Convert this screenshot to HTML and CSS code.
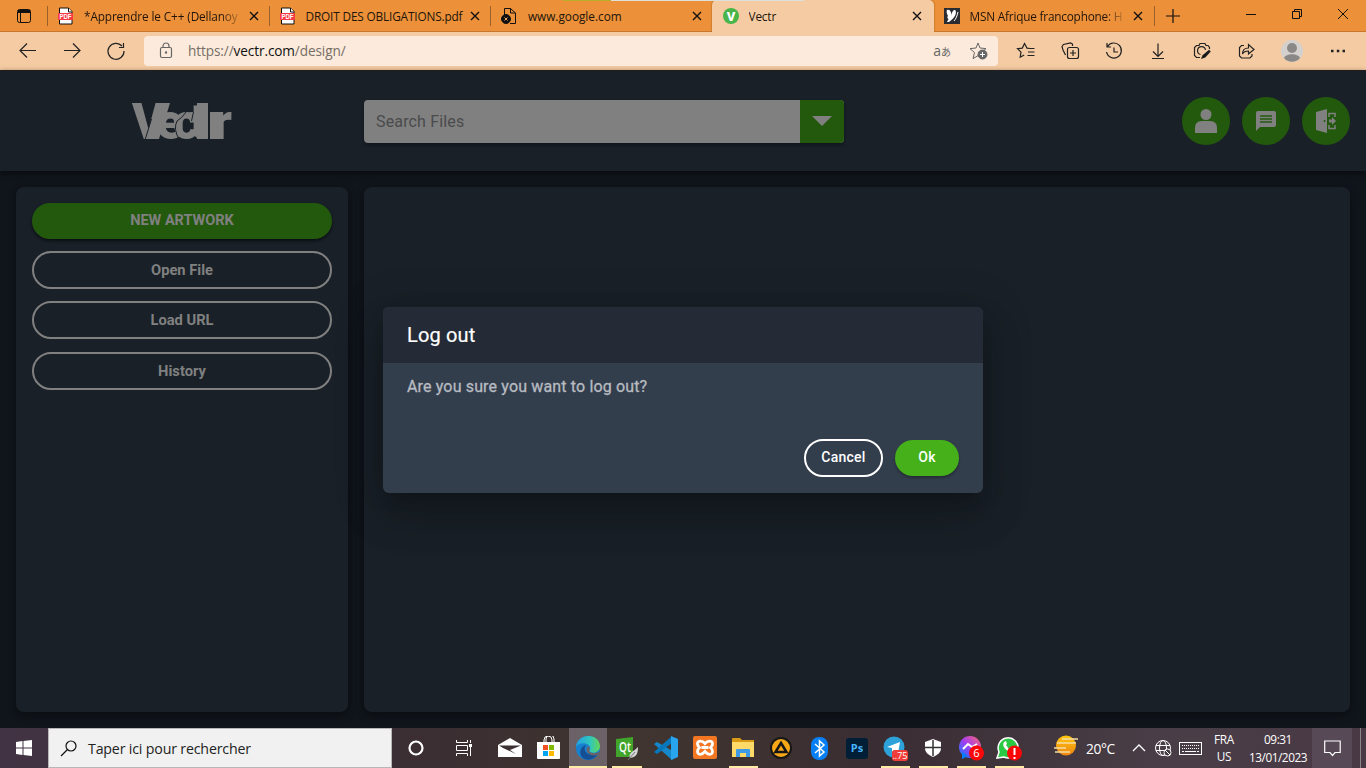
FILE: index.html
```html
<!DOCTYPE html>
<html lang="fr">
<head>
<meta charset="utf-8">
<title>Vectr</title>
<link rel="stylesheet" href="styles.css">
</head>
<body>
<svg width="0" height="0" class="defs">
  <defs>
    <symbol id="close" viewBox="0 0 10 10"><path d="M1 1l8 8M9 1L1 9" stroke="#111" stroke-width="1.4" fill="none"/></symbol>
    <symbol id="pdf" viewBox="0 0 16 18"><path d="M1.500 1h9l3.500 3.500V17H1.500z" fill="#fff" stroke="#111"/><path d="M10.500 1v4H14" fill="#fff" stroke="#111"/><rect y="6" width="15" height="7" rx="1" fill="#f83b42"/><text x="1.500" y="12" textLength="12" lengthAdjust="spacingAndGlyphs" font-family="Liberation Sans" font-weight="700" font-size="6.300" fill="#fff">PDF</text></symbol>
  </defs>
</svg>
<header class="browser">
  <div class="tabs">
    <div class="top-strip"></div>
    <div class="workspace"><svg width="16" height="16" viewBox="0 0 16 16" fill="none" stroke="#111"><rect x="1.500" y="1.500" width="13" height="13" rx="2"/><path d="M2 3.500h12" stroke-width="3"/><path d="M4.500 5v9"/></svg></div>
    <div class="tab"><svg class="fav" width="16" height="18"><use href="#pdf"/></svg><span class="title fade t1">*Apprendre le C++ (Dellanoy</span><svg width="10" height="10"><use href="#close"/></svg></div>
    <div class="tab"><svg class="fav" width="16" height="18"><use href="#pdf"/></svg><span class="title t2">DROIT DES OBLIGATIONS.pdf</span><svg width="10" height="10"><use href="#close"/></svg></div>
    <div class="tab"><svg class="fav" width="16" height="18" viewBox="0 0 16 18" fill="none" stroke="#111"><path d="M3.500 8V1.500h6L14.500 6v10.500H9M9.500 1.500V6h5"/><circle cx="5" cy="12" r="4.500" fill="#111"/><path d="M3.500 10.500l3 3m0-3l-3 3" stroke="#f3a35c"/></svg><span class="title t3">www.google.com</span><svg width="10" height="10"><use href="#close"/></svg></div>
    <div class="tab active"><svg class="fav" width="16" height="16" viewBox="0 0 16 16"><circle cx="8" cy="8" r="8" fill="#48b549"/><text x="8" y="12.500" text-anchor="middle" font-family="Roboto" font-weight="900" font-size="13" fill="#fff">V</text></svg><span class="title">Vectr</span><svg width="10" height="10"><use href="#close"/></svg></div>
    <div class="tab msn"><svg class="fav" width="16" height="16" viewBox="0 0 16 16"><path d="M0 0h16v16H0z" fill="#292c31"/><path d="M3 2c3-1.500 4.500 2 4.500 6C7.500 4 10 1 11.500 2.500c1.500 3-1 7.500-6.500 11.500H3l1.500-3C3 10 3 9 4 8 3 6 2 4 3 2z" fill="#fff"/><path d="M14 4c-1 4-2 7-4 9" stroke="#fff" fill="none"/></svg><span class="title fade t5">MSN Afrique francophone: H</span><svg width="10" height="10"><use href="#close"/></svg></div>
    <div class="newtab"><svg width="14" height="14"><path d="M7 0v14M0 7h14" stroke="#111" stroke-width="1.200"/></svg></div>
    <div class="window-controls">
      <svg width="46" height="28" fill="none" stroke="#111"><path d="M18 14.500h10"/></svg>
      <svg width="46" height="28" fill="none" stroke="#111"><path d="M18.500 11.500h7v7h-7zM20.500 11V9.500h7v7H26"/></svg>
      <svg width="46" height="28" fill="none" stroke="#111"><path d="M18 9l10 10m0-10L18 19"/></svg>
    </div>
  </div>
  <div class="toolbar">
    <div class="nav">
      <svg viewBox="0 0 44 38"><path d="M14 18.500h16M21 11.500l-7 7 7 7"/></svg>
      <svg viewBox="0 0 44 38"><path d="M14 18.500h16M23 11.500l7 7-7 7"/></svg>
      <svg viewBox="0 0 44 38"><path d="M28 14a8 8 0 1 0 2 5M29.500 11v4.500H25"/></svg>
    </div>
    <div class="address">
      <svg width="14" height="18" viewBox="0 0 14 18" fill="none" stroke="#666" stroke-width="1.200"><rect x="1.500" y="5.500" width="11" height="10" rx="1.500"/><path d="M4 5.500V4a3 3 0 0 1 6 0v1.500"/><circle cx="7" cy="10.500" r=".6" fill="#666"/></svg>
      <span class="url">https://<b>vectr.com</b>/design/</span>
      <span class="translate">a<small>あ</small></span>
      <svg width="20" height="20" viewBox="0 0 20 20" fill="none" stroke="#666"><path d="M10 2l2 5 6 .6-4.500 4 1 6-4.500-3-5 3 1.500-6L2 7.600 8 7z"/><circle cx="14.500" cy="13.500" r="4.500" fill="#666"/><path d="M14.500 11v5M12 13.500h5" stroke="#fff"/></svg>
    </div>
    <div class="actions">
      <svg viewBox="0 0 44 38"><path d="M26 16.500l-3-.4-2.500-4.600-2.200 4.600-4.800.6 3.500 3.500-.8 5 4-2.200M24.500 16.500h6M24 20h6.500M23.500 23.500h7"/></svg>
      <svg viewBox="0 0 44 38"><rect x="19.500" y="15.500" width="11" height="11" rx="2"/><path d="M25 18v6M22 21h6M17.500 23l-2.500-5-1-3.500 1.500-2 7-1.500 2 1v2"/></svg>
      <svg viewBox="0 0 44 38"><path d="M15.500 14.500A7.500 7.500 0 1 1 14.500 20M15 11v4h4M22 15.500v4.500h4"/></svg>
      <svg viewBox="0 0 44 38"><path d="M22 11.500v13M17 19.500l5 5 5-5M16 26.500h12"/></svg>
      <svg viewBox="0 0 44 38"><path d="M20 25.500h-3.500l-2-2v-8l2-2H19l1-2h5l1 2h2l1.500 2v1.500M20.500 22.500a4 4 0 1 1 5-4.500"/><path d="M22 26l1-2.500 6-5 1 1-5 5.500z" fill="#111"/></svg>
      <svg viewBox="0 0 44 38"><path d="M20 13.500h-2.500l-2 2V24l2 2H26l2-2v-2M18.500 22c0-4 2-6 6-6v-3.500l5.500 5-5.500 4.500v-3c-3 0-5 1-6 3z"/></svg>
      <svg class="profile" viewBox="0 0 48 38"><circle cx="24" cy="19" r="11" fill="#d3d0ce" stroke="none"/><circle cx="24" cy="16" r="5" fill="#8a8886" stroke="none"/><path d="M16 26c2-5 14-5 16 0-4 5-12 5-16 0z" fill="#8a8886" stroke="none"/></svg>
      <svg viewBox="0 0 44 38"><path d="M15 19h2.500M20.800 19h2.500M26.500 19H29" stroke-width="2.300"/></svg>
    </div>
  </div>
</header>
<main class="app">
  <div class="app-header">
    <svg class="logo" width="104" height="40" viewBox="0 0 104 40" font-family="Roboto" font-weight="900" font-size="50" fill="#808080"><path d="M66 2h11v36H66zM79 11h11v27H79zM27 2h12L28 38H15z"/><text y="37.500" x="1 25 42 59 82">Vectr</text><path d="M20.500 18l-6.500 21M56 10q-6 8-10 10-4 8 2 18M78 1v38M62.500 11l-2 9" fill="none" stroke="#192027"/></svg>
    <div class="search"><span>Search Files</span><div><svg width="20" height="10"><path d="M0 0h20L10 10z" fill="#808080"/></svg></div></div>
    <div class="round-buttons">
      <div><svg width="24" height="26" viewBox="0 0 24 26"><circle cx="12" cy="6.500" r="5.500"/><path d="M1 25v-5q0-7 7-7h8q7 0 7 7v5z"/></svg></div>
      <div><svg width="20" height="20" viewBox="0 0 20 20"><path d="M2 0h16q2 0 2 2v12q0 2-2 2H4l-4 4V2q0-2 2-2z"/><path d="M4 5h12M4 8h12M4 11h12" stroke="#23590d" stroke-width="1.500"/></svg></div>
      <div><svg width="22" height="24" viewBox="0 0 22 24"><path d="M1 3l11-3v24L1 21z"/><circle cx="9.500" cy="12" r="1" fill="#23590d"/><path d="M14 8V4.500h6V8m0 8v3.500h-6V16" fill="none" stroke="#808080" stroke-width="1.500"/><path d="M14 10.500h3V8l4 4-4 4v-2.500h-3z"/></svg></div>
    </div>
  </div>
  <div class="workspace-grid">
    <aside class="panel side"><div class="pill primary">NEW ARTWORK</div><div class="pill">Open File</div><div class="pill">Load URL</div><div class="pill last">History</div></aside>
    <section class="panel"></section>
  </div>
  <div class="modal">
    <h1>Log out</h1>
    <div class="modal-body"><p>Are you sure you want to log out?</p><div class="modal-actions"><button class="cancel">Cancel</button><button class="ok">Ok</button></div></div>
  </div>
</main>
<footer class="taskbar">
  <div class="start"><svg width="16" height="16" fill="#fff"><path d="M0 2l6.500-1v6.500H0zM7.500 1L16 0v7.500H7.500zM0 8.500h6.500V15L0 14zM7.500 8.500H16V16l-8.500-1z"/></svg></div>
  <div class="task-search"><svg width="17" height="17" fill="none" stroke="#111" stroke-width="1.200"><circle cx="11" cy="6" r="5"/><path d="M7.500 9.500L1 16"/></svg><span>Taper ici pour rechercher</span></div>
  <div class="item wide"><svg width="16" height="16"><circle cx="8" cy="8" r="6.500" fill="none" stroke="#fff" stroke-width="2.200"/></svg></div>
  <div class="item view"><svg width="17" height="16" fill="none" stroke="#fff"><path d="M.5 0v2.500h11V0M.5 16v-2.500h11V16M.5 5.500h11v5H.5zM14.500 0v3M14.500 7v9"/><path d="M13 4h3v3h-3z" fill="#fff" stroke="none"/></svg></div>
  <div class="item"><svg width="24" height="20"><path d="M12 0l12 7v12H0V7z" fill="#fff"/><path d="M1 7.500h22L12 12l6 4-13-6z" fill="#3b3032"/></svg></div>
  <div class="item store"><svg width="24" height="24"><path d="M7 6V4a4 4 0 0 1 8 0v2M9 6V3a4 4 0 0 1 8 0v3" fill="none" stroke="#fff"/><path d="M0 6h23v16q0 1-1 1H1q-1 0-1-1z" fill="#fff"/><path d="M6 9h5v5H6z" fill="#f25022"/><path d="M12 9h5v5h-5z" fill="#7fba00"/><path d="M6 15h5v5H6z" fill="#00a4ef"/><path d="M12 15h5v5h-5z" fill="#ffb900"/></svg></div>
  <div class="item edge run"><svg width="24" height="24" viewBox="0 0 24 24"><defs><linearGradient id="eg"><stop stop-color="#239ee5"/><stop offset=".6" stop-color="#31c7bc"/><stop offset="1" stop-color="#65d653"/></linearGradient></defs><circle cx="12" cy="12" r="12" fill="#1781d0"/><path d="M0 11C1-3 23-4 24 10c0 6-6 8-10 6-2-1 1-2 0-5C12 6 3 6 0 11z" fill="url(#eg)"/><path d="M10 9c-4 5 1 12 12 9-4 6-11 7-15 4S3 11 10 9z" fill="#144e95"/><path d="M13 10c2 3-1 4 1 6 3 2 7 1 9 0l1 0-2 3c-2 0-4 1-7 0-5-2-6-7-2-9z" fill="#6b6267"/></svg></div>
  <div class="item w39 run"><svg width="24" height="24"><path d="M1 3l17-2v16L14 21H1z" fill="#41a52b"/><text x="10" y="16" text-anchor="middle" textLength="12" lengthAdjust="spacingAndGlyphs" font-family="Open Sans" font-weight="600" font-size="15" fill="#fff">Qt</text><path d="M23 11c0 6-1 10-8 11-2-5 3-6 8-11z" fill="#d4d4d4"/><path d="M13 24l7-8" stroke="#777"/></svg></div>
  <div class="item w39"><svg width="24" height="24"><path d="M0 8l3-2 21 12-6 6z" fill="#1687c9"/><path d="M0 16L18 0v7L3 18z" fill="#0876ba"/><path d="M17 0l7 3v18l-7 3z" fill="#28a5ed"/></svg></div>
  <div class="item w39"><svg width="24" height="24"><rect width="24" height="23" rx="2" fill="#f37623"/><path d="M12 7.500C9 4 4 4.500 4.500 8c.2 2 1.200 2.500 2 3.500-1 1-2 2-2 4 .3 4 4.500 3.500 7.500 0 3 3.500 7.200 4 7.500 0 0-2-1-3-2-4 .8-1 1.800-1.500 2-3.500.5-3.500-4.500-4-7.500-.5zM8.500 11.500h7" fill="none" stroke="#fff" stroke-width="2.800"/></svg></div>
  <div class="item run"><svg width="22" height="20"><path d="M0 1q0-1 1-1h7l2 2h12v17H0z" fill="#d99a16"/><path d="M0 4h22v15H0z" fill="#ffda68"/><path d="M4 19v-7q0-1 1-1h12q1 0 1 1v7h-4v-4H8v4z" fill="#3f9be6"/></svg></div>
  <div class="item"><svg width="22" height="22"><circle cx="11" cy="11" r="11" fill="#171717"/><circle cx="11" cy="11" r="9" fill="#f7a817"/><path d="M11 6l5.500 9h-11z" fill="none" stroke="#171717" stroke-width="2.500"/></svg></div>
  <div class="item"><svg width="17" height="23"><rect width="17" height="23" rx="8" fill="#087ff4"/><path d="M4 7l9 8-4.500 4V4L13 8l-9 8" fill="none" stroke="#fff" stroke-width="1.500"/></svg></div>
  <div class="item"><svg width="22" height="21"><rect width="22" height="21" rx="3" fill="#001e36"/><text x="11" y="14" text-anchor="middle" font-family="Open Sans" font-weight="700" font-size="11" fill="#4ab4ff">Ps</text></svg></div>
  <div class="item run"><svg width="25" height="25"><circle cx="11" cy="11" r="10.500" fill="#2da2d9"/><path d="M4 11l13-5-2 11-4-3-2 2v-4z" fill="#fff"/><rect x="9" y="14" width="16" height="11" rx="3" fill="#ef3e38"/><text x="17" y="22.500" text-anchor="middle" font-family="Open Sans" font-size="9" fill="#fff">..75</text></svg></div>
  <div class="item run"><svg width="18" height="18"><path d="M9 0l8 3v6c0 5-4 7-8 9-4-2-8-4-8-9V3z" fill="#fff"/><path d="M9 1v16M1 8.500h16" stroke="#333" stroke-width="1.500"/></svg></div>
  <div class="item run"><svg width="26" height="26" viewBox="0 0 26 26"><defs><linearGradient id="mg" x1="0" y1="1" x2="1" y2="0"><stop stop-color="#087cff"/><stop offset=".5" stop-color="#a43df2"/><stop offset="1" stop-color="#ff676b"/></linearGradient></defs><circle cx="12" cy="12" r="11" fill="url(#mg)"/><path d="M4 17v7l6-3z" fill="#087cff"/><path d="M5 14l5-5 4 3 5-3" stroke="#fff" stroke-width="2" fill="none"/><circle cx="18.500" cy="18" r="7.500" fill="#fb0707"/><text x="18.500" y="22" text-anchor="middle" font-family="Open Sans" font-size="11" fill="#fff">6</text></svg></div>
  <div class="item run"><svg width="26" height="26" viewBox="0 0 26 26"><path d="M1 23l2-6A10 10 0 1 1 8 22z" fill="#2ac943" stroke="#fff" stroke-width="1.500"/><path d="M8 7c-3 4 3 10 8 10l2-3-3-1-2 1-3-4 1-1-1-3z" fill="#fff"/><circle cx="18.500" cy="18" r="7.500" fill="#fb0707"/><path d="M18.500 13v7M18.500 22v2" stroke="#fff" stroke-width="2"/></svg></div>
  <div class="tray">
    <svg class="weather" width="24" height="22"><defs><linearGradient id="sun" x2="0" y2="1"><stop stop-color="#ffc60a"/><stop offset="1" stop-color="#ee8514"/></linearGradient></defs><circle cx="12" cy="10.500" r="10" fill="url(#sun)"/><path d="M8 4h16M3 8h19M0 13h12M1 17h15" stroke="#f6dda4" stroke-width="1.700"/></svg>
    <span class="temp">20°C</span>
    <svg class="chev" width="14" height="8" fill="none" stroke="#fff" stroke-width="1.300"><path d="M1 7l6-6 6 6"/></svg>
    <svg class="globe" width="17" height="17" fill="none" stroke="#fff"><circle cx="8" cy="8" r="7.500"/><ellipse cx="8" cy="8" rx="3.500" ry="7.500"/><path d="M1 5.500h14M1 10.500h9"/><circle cx="12.500" cy="12.500" r="3.500" fill="#443a42"/><path d="M10 10l5 5"/></svg>
    <svg class="keyboard" width="23" height="13" fill="none" stroke="#fff"><rect x=".5" y=".5" width="22" height="12"/><path d="M3 3.500h18M3 6.500h18" stroke-dasharray="1 1"/><path d="M3 9.500h2M6 9.500h11M18 9.500h2"/></svg>
    <div class="lang">FRA<br>US</div><div class="clock">09:31<br>13/01/2023</div>
    <div class="notify"><svg width="17" height="17" fill="none" stroke="#fff" stroke-width="1.200"><path d="M.7 1h15.500v11.500H11l-2.500 3-2.500-3H.7z"/></svg></div>
    <div class="desktop"></div>
  </div>
</footer>
</body>
</html>
```
FILE: styles.css
```css
* { box-sizing: border-box; }
body { margin: 0; width: 1366px; height: 768px; overflow: hidden; font-family: "Open Sans", "Noto Sans", sans-serif; display: flex; flex-direction: column; background: #10151b; }
svg { display: block; flex: none; }
.defs { position: absolute; }
.browser { height: 71px; border-bottom: 1px solid #292420; flex: none; }
.tabs { height: 32px; background: #ec9039; display: flex; position: relative; box-shadow: inset 0 -1px #c8772f; }
.top-strip { position: absolute; left: 563px; top: 0; width: 241px; height: 1px; background: linear-gradient(90deg, #b7ad28 48px, #dedfd9 48px); z-index: 2; }
.workspace { width: 48px; padding: 8px 0 0 16px; }
.tab { width: 221.5px; height: 32px; display: flex; align-items: center; padding: 0 11px 0 10px; position: relative; }
.tab::before { content: ""; position: absolute; left: -1px; top: 6px; width: 1px; height: 20px; background: #99602b; }
.tab .fav { margin-right: 10px; }
.title { font-size: 11.8px; white-space: nowrap; overflow: hidden; flex: 1; color: #21150b; line-height: 18px; letter-spacing: -.15px; margin-right: 6px; }
.t1 { letter-spacing: -.12px; }
.t3 { letter-spacing: -.02px; padding-left: 1px; }
.t5 { letter-spacing: -.2px; }
.fade { -webkit-mask-image: linear-gradient(90deg, #000 86%, transparent 100%); mask-image: linear-gradient(90deg, #000 86%, transparent 100%); }
.active { background: #f5cba3; border-radius: 5px 5px 0 0; width: 222px; margin-left: -1px; box-shadow: 0 0 2px #995914; clip-path: inset(0 -3px 0 -3px); padding-left: 11px; padding-right: 12px; }
.active::before, .msn::before { display: none; }
.msn { width: 220.5px; }
.newtab { border-left: 1px solid #99602b; height: 20px; margin-top: 6px; padding: 3px 11px; }
.window-controls { display: flex; margin-left: auto; }
.toolbar { height: 38px; display: flex; align-items: center; background: #f5cba3; padding-left: 6px; }
.nav, .actions { display: flex; }
.nav svg, .actions svg { width: 44px; height: 38px; fill: none; stroke: #222; stroke-width: 1.2; }
.actions { margin-left: 6px; }
.actions .profile { width: 48px; }
.address { margin-left: 6px; width: 854px; height: 30px; background: #fcebdc; border-radius: 4px; display: flex; align-items: center; padding: 0 10px 0 15px; }
.url { flex: 1; margin-left: 15px; font-size: 13.6px; letter-spacing: -.1px; color: #766d66; line-height: 20px; }
.url b { font-weight: 400; color: #111; }
.translate { font: 14px "Open Sans", "Noto Sans CJK JP", sans-serif; line-height: 20px; color: #666; margin-right: 17px; }
.translate small { font-size: 10px; }
.app { height: 657px; position: relative; font-family: Roboto, sans-serif; background: #10151b; }
.app-header { height: 100px; background: #192027; display: flex; align-items: center; padding: 0 16px 0 131px; box-shadow: 0 2px 6px #080b0f; position: relative; }
.logo { margin-right: 129px; overflow: visible; }
.search { width: 480px; height: 43px; border-radius: 4px; background: #808080; display: flex; align-items: center; overflow: hidden; box-shadow: 0 2px 3px #10151b; color: #4a4b4c; font-size: 16px; letter-spacing: .15px; }
.search span { flex: 1; padding-left: 12px; }
.search div { width: 44px; height: 43px; background: #23590d; display: flex; align-items: center; justify-content: center; }
.round-buttons { display: flex; gap: 12px; margin-left: auto; }
.round-buttons div { width: 48px; height: 48px; border-radius: 50%; background: #23590d; display: flex; align-items: center; justify-content: center; }
.round-buttons svg { fill: #808080; }
.workspace-grid { height: 557px; padding: 16px; display: grid; grid-template-columns: 332px 1fr; gap: 16px; }
.panel { background: #192027; border-radius: 8px; box-shadow: 0 3px 7px #0b0e12; }
.side { padding: 16px; display: flex; flex-direction: column; gap: 12px; }
.pill { height: 38px; border: 2px solid #808080; border-radius: 19px; display: flex; justify-content: center; align-items: center; color: #808080; font-weight: 700; font-size: 14.7px; padding-bottom: 1px; }
.primary { height: 36px; background: #23590d; border: 0; box-shadow: 0 2px 3px #0c1015; font-size: 14.5px; }
.last { margin-top: 1px; }
.modal { position: absolute; left: 383px; top: 236px; width: 600px; height: 186px; border-radius: 6px; background: #333e4d; overflow: hidden; box-shadow: 0 11px 15px -7px rgba(0,0,0,.2), 0 9px 46px 8px rgba(0,0,0,.13), 0 24px 38px 3px rgba(0,0,0,.15); }
.modal h1 { height: 56px; margin: 0; padding: 0 24px; background: #252b36; color: #fff; font-size: 20px; font-weight: 400; line-height: 56px; letter-spacing: .15px; -webkit-text-stroke: .2px #fff; }
.modal-body { height: 130px; padding: 12px 24px 16px; display: flex; flex-direction: column; justify-content: space-between; }
.modal p { margin: 0; font-size: 16px; line-height: 24px; color: #b7bbc1; letter-spacing: .15px; -webkit-text-stroke: .3px #b7bbc1; }
.modal-actions { display: flex; justify-content: flex-end; align-items: center; gap: 12px; }
.modal button { font: 500 14px Roboto, sans-serif; letter-spacing: .25px; color: #fff; border: 0; padding: 0 0 2px; border-radius: 19px; }
.modal .cancel { width: 79px; height: 38px; background: none; border: 2px solid #fff; }
.modal .ok { width: 64px; height: 36px; background: #45b019; box-shadow: 0 2px 3px #252b36; }
.taskbar { height: 40px; display: flex; background: linear-gradient(90deg, #423344, #3b2e32 33%, #40352f 46%, #3a2d33 65%, #493e47 85%, #493945); color: #fff; }
.start { width: 48px; display: flex; align-items: center; justify-content: center; }
.task-search { width: 344px; background: #f1f1f1; border: 1px solid #b9b5b9; display: flex; align-items: center; padding-left: 11px; color: #222; font-size: 14.2px; letter-spacing: -.17px; }
.task-search span { margin-left: 11px; }
.item { width: 38px; display: flex; align-items: center; justify-content: center; position: relative; }
.wide { width: 48px; }
.view { width: 48px; margin-right: 3px; }
.store { margin-right: 2px; padding-left: 2px; }
.w39 { width: 39px; }
.run::after { content: ""; position: absolute; bottom: 0; left: 5px; right: 4px; height: 2px; background: #ffeaa8; }
.edge { background: #6b6267; }
.edge::after { left: 0; right: 0; }
.tray { flex: 1; display: flex; align-items: center; font-size: 11.8px; }
.weather { margin: -4px 8px 0 26px; }
.temp { width: 46px; font-size: 13.8px; letter-spacing: -.4px; }
.globe { margin-left: 9px; }
.keyboard { margin-left: 7px; }
.lang { width: 42px; text-align: center; line-height: 17px; margin-left: 1px; letter-spacing: -.3px; }
.clock { width: 66px; text-align: center; line-height: 18px; letter-spacing: -.45px; margin-top: -1px; }
.notify { width: 40px; height: 40px; background: #574955; margin-left: 1px; display: flex; align-items: center; justify-content: center; }
.desktop { width: 1px; height: 40px; background: #8d818b; margin-left: 8px; }
```
